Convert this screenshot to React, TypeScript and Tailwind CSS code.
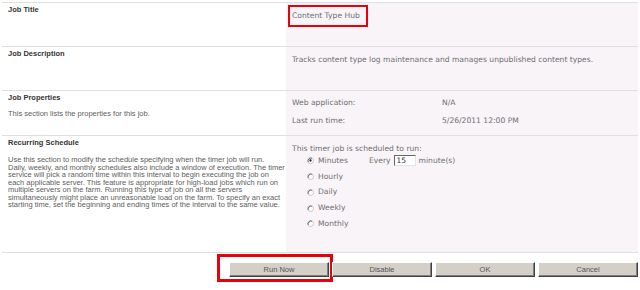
import React from 'react'

const descLines = [
  'Use this section to modify the schedule specifying when the timer job will run.',
  'Daily, weekly, and monthly schedules also include a window of execution. The timer',
  'service will pick a random time within this interval to begin executing the job on',
  'each applicable server. This feature is appropriate for high-load jobs which run on',
  'multiple servers on the farm. Running this type of job on all the servers',
  'simultaneously might place an unreasonable load on the farm. To specify an exact',
  'starting time, set the beginning and ending times of the interval to the same value.'
]

const schedules = ['Minutes', 'Hourly', 'Daily', 'Weekly', 'Monthly']

const tahoma = 'font-["Liberation_Sans",Arial,sans-serif]'
const verdana = 'font-["DejaVu_Sans",Verdana,sans-serif]'

const Radio: React.FC<{ checked?: boolean }> = ({ checked }) => (
  <svg viewBox="0 0 8 8" className="w-[7px] h-[7px] shrink-0">
    <circle cx="4" cy="4" r="3.4" fill="#fff" stroke="#bbb" strokeWidth="0.9" />
    <path d="M1.4 5.6A3.4 3.4 0 0 1 5.6 1.4" fill="none" stroke="#555" strokeWidth="1" />
    {checked && <circle cx="4" cy="4" r="1.3" fill="#222" />}
  </svg>
)

const SectionHead: React.FC<{ title: string }> = ({ title }) => (
  <div className={`${tahoma} pt-[3px] text-[7.5px] leading-[8px] font-bold text-[#333]`}>{title}</div>
)

const Button: React.FC<{ label: string; marked?: boolean }> = ({ label, marked }) => (
  <div className="relative flex">
    <button
      className={`${tahoma} block w-[100px] h-[15px] bg-[#d4d0c8] border border-t-white border-l-white border-r-[#404040] border-b-[#404040] shadow-[inset_-1px_-1px_0_#808080] text-[7.5px] leading-[12px] text-[#555]`}
    >
      {label}
    </button>
    {marked && (
      <span className="absolute left-[-12px] top-[-8px] right-[-4px] bottom-[-5px] border-[3px] border-[#e8000b] pointer-events-none" />
    )}
  </div>
)

export default function App() {
  return (
    <div className="w-[640px] h-[290px] bg-white px-[2px] pt-[2px] overflow-hidden">
      <div className="grid grid-cols-[284px_1fr] border-b border-[#dfdfdf]">
        {/* Job title */}
        <div className="h-[44px] border-t border-[#dfdfdf] pl-[6px]">
          <SectionHead title="Job Title" />
        </div>
        <div className={`h-[44px] border-t border-[#dfdfdf] bg-[#f8f4f8] pl-[6px] pt-[8px] ${verdana} text-[7.6px] leading-[10px] text-[#707070]`}>
          <span className="relative inline-block">
            Content Type Hub
            <span className="absolute left-[-4px] top-[-6px] w-[80px] h-[22px] border-2 border-[#e8000b]" />
          </span>
        </div>

        {/* Job description */}
        <div className="h-[44px] border-t border-[#dfdfdf] pl-[6px]">
          <SectionHead title="Job Description" />
        </div>
        <div className={`h-[44px] border-t border-[#dfdfdf] bg-[#f8f4f8] pl-[6px] pt-[8px] ${verdana} text-[7.6px] leading-[10px] text-[#707070] whitespace-nowrap`}>
          Tracks content type log maintenance and manages unpublished content types.
        </div>

        {/* Job properties */}
        <div className="h-[45px] border-t border-[#dfdfdf] pl-[6px]">
          <SectionHead title="Job Properties" />
          <div className={`${tahoma} mt-[8px] text-[7.5px] leading-[8px] text-[#606060]`}>
            This section lists the properties for this job.
          </div>
        </div>
        <div className={`h-[45px] border-t border-[#dfdfdf] bg-[#f8f4f8] pl-[6px] pt-[7px] ${verdana} text-[7.6px] leading-[10px] text-[#707070]`}>
          <div className="flex flex-col gap-[8px]">
            <div className="flex">
              <span className="w-[150px]">Web application:</span>
              <span>N/A</span>
            </div>
            <div className="flex">
              <span className="w-[150px]">Last run time:</span>
              <span>5/26/2011 12:00 PM</span>
            </div>
          </div>
        </div>

        {/* Recurring schedule */}
        <div className="h-[117px] border-t border-[#dfdfdf] pl-[6px]">
          <SectionHead title="Recurring Schedule" />
          <div className={`${tahoma} mt-[9px] text-[7.5px] leading-[7.5px] text-[#606060] whitespace-nowrap`}>
            {descLines.map((line) => (
              <div key={line}>{line}</div>
            ))}
          </div>
        </div>
        <div className={`h-[117px] border-t border-[#dfdfdf] bg-[#f8f4f8] pl-[6px] pt-[8px] ${verdana} text-[7.6px] leading-[10px] text-[#707070]`}>
          <div>This timer job is scheduled to run:</div>
          <div className="mt-[-1px] pl-[15px]">
            {schedules.map((name, i) => (
              <div key={name} className="h-[15.75px] flex items-center">
                <Radio checked={i === 0} />
                <span className={`ml-[4px] ${i === 0 ? 'w-[51px]' : ''}`}>{name}</span>
                {i === 0 && (
                  <>
                    <span>Every</span>
                    <span className="ml-[3px] w-[22px] h-[11px] bg-white border border-t-[#666] border-l-[#666] border-r-[#e4e4e4] border-b-[#e4e4e4] pl-[2px] text-[7.5px] leading-[9px] text-[#333]">
                      15
                    </span>
                    <span className="ml-[3px]">minute(s)</span>
                  </>
                )}
              </div>
            ))}
          </div>
        </div>
      </div>

      {/* Actions */}
      <div className="flex justify-end gap-[3px] pt-[9px]">
        <Button label="Run Now" marked />
        <Button label="Disable" />
        <Button label="OK" />
        <Button label="Cancel" />
      </div>
    </div>
  )
}
